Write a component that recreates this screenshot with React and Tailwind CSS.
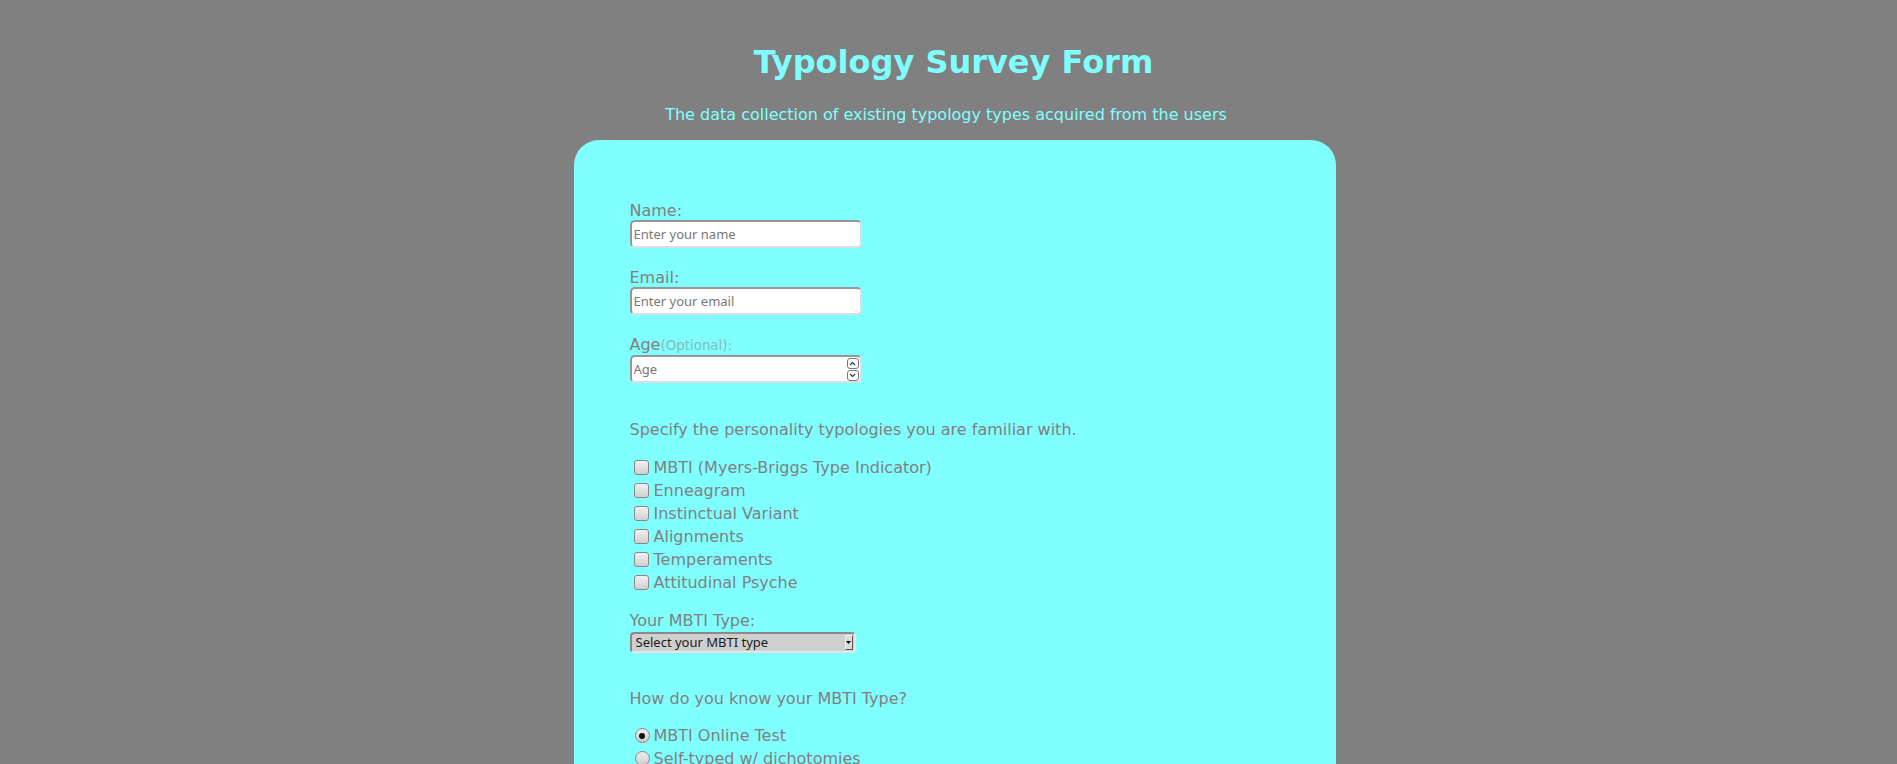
import { useState } from "react";

const typologies = [
  "MBTI (Myers-Briggs Type Indicator)",
  "Enneagram",
  "Instinctual Variant",
  "Alignments",
  "Temperaments",
  "Attitudinal Psyche",
];

const sources = [
  "MBTI Online Test",
  "Self-typed w/ dichotomies",
  "Self-typed w/ cognitive functions",
  "Typed by others",
];

const inputClass =
  "block w-[232px] h-[28px] bg-white rounded-[5px] border-2 border-t-[#969696] border-l-[#969696] border-b-[#dedede] border-r-[#dedede] pl-[2px] text-[13px] text-[#333] outline-none placeholder:text-[#777] font-['Noto_Sans',sans-serif]";

const App = () => {
  const [source, setSource] = useState(sources[0]);

  return (
    <div className="min-h-screen bg-[#808080] pt-[44px] font-['DejaVu_Sans',sans-serif]">
      <h1 className="pl-[10px] text-center text-[32px] leading-[37px] font-bold text-[#80ffff]">
        Typology Survey Form
      </h1>
      <p className="mt-[24px] pr-[5px] text-center text-[16px] leading-[19px] text-[#80ffff]">
        The data collection of existing typology types acquired from the users
      </p>

      <form className="ml-[calc(50%-375px)] mt-[16px] w-[762px] rounded-[25px] bg-[#80ffff] pl-[56px] pt-[61px] pb-[48px] text-[16px] leading-[19px] text-[#808080]">

        {/* Personal info */}
        <label className="block">Name:</label>
        <input type="text" placeholder="Enter your name" className={inputClass} />

        <label className="mt-[20px] block">Email:</label>
        <input type="email" placeholder="Enter your email" className={inputClass} />

        <label className="mt-[20px] block">
          Age<span className="text-[13.4px] text-[#84baba]">(Optional):</span>
        </label>
        <div className="relative w-[232px]">
          <input type="text" placeholder="Age" className={inputClass} />
          <div className="absolute right-[3px] top-[3px] flex flex-col gap-[1px]">
            <span className="flex h-[11px] w-[12px] items-center justify-center rounded-[3px] border border-[#777] bg-white">
              <svg width="7" height="5" viewBox="0 0 7 5" fill="none" stroke="#333" strokeWidth="1.2">
                <path d="M1 4L3.5 1.5L6 4" />
              </svg>
            </span>
            <span className="flex h-[11px] w-[12px] items-center justify-center rounded-[3px] border border-[#777] bg-white">
              <svg width="7" height="5" viewBox="0 0 7 5" fill="none" stroke="#333" strokeWidth="1.2">
                <path d="M1 1L3.5 3.5L6 1" />
              </svg>
            </span>
          </div>
        </div>

        {/* Typologies */}
        <p className="mt-[37px]">Specify the personality typologies you are familiar with.</p>
        <div className="mt-[17px]">
          {typologies.map((t) => (
            <label key={t} className="flex h-[23px] items-center">
              <input
                type="checkbox"
                className="ml-[4px] mr-[5px] h-[15px] w-[15px] shrink-0 appearance-none rounded-[3px] border border-[#888] bg-gradient-to-b from-[#f0f0f0] to-[#d0d0d0]"
              />
              {t}
            </label>
          ))}
        </div>

        <label className="mt-[17px] block">Your MBTI Type:</label>
        <div className="relative mt-[2px] w-[226px]">
          <select className="block h-[21px] w-[226px] appearance-none rounded-[4px] border-2 border-t-[#8a8a8a] border-l-[#8a8a8a] border-b-[#e6e6e6] border-r-[#e6e6e6] bg-[#cfcfcf] pl-[4px] text-[13px] leading-[17px] text-[#1a1a1a] outline-none font-['Noto_Sans',sans-serif]">
            <option>Select your MBTI type</option>
            <option>INTJ</option>
            <option>INTP</option>
            <option>ENTJ</option>
            <option>ENTP</option>
            <option>INFJ</option>
            <option>INFP</option>
            <option>ENFJ</option>
            <option>ENFP</option>
          </select>
          <span className="pointer-events-none absolute right-[3px] top-[3px] flex h-[15px] w-[8px] items-center justify-center border border-t-[#f0f0f0] border-l-[#f0f0f0] border-b-[#555] border-r-[#555] bg-[#dcdcdc]">
            <svg width="5" height="3" viewBox="0 0 5 3">
              <path d="M0 0H5L2.5 3Z" fill="#000" />
            </svg>
          </span>
        </div>

        {/* Source */}
        <p className="mt-[36px]">How do you know your MBTI Type?</p>
        <div className="mt-[16px]">
          {sources.map((s) => (
            <label key={s} className="flex h-[23px] items-center">
              <input
                type="radio"
                name="source"
                checked={source === s}
                onChange={() => setSource(s)}
                className="ml-[5px] mr-[4px] grid h-[15px] w-[15px] shrink-0 appearance-none place-content-center rounded-full border border-[#888] bg-gradient-to-b from-[#f0f0f0] to-[#cccccc] before:h-[6px] before:w-[6px] before:rounded-full before:bg-transparent checked:before:bg-[#111] before:content-['']"
              />
              {s}
            </label>
          ))}
        </div>
      </form>
    </div>
  );
};

export default App;
